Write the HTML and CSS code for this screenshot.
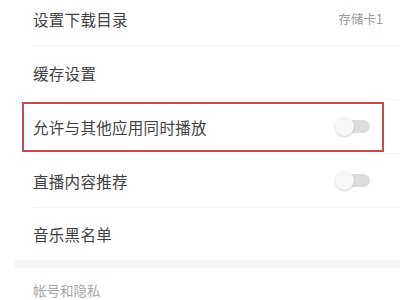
FILE: index.html
```html
<!DOCTYPE html>
<html>
<head>
<meta charset="utf-8">
<link rel="stylesheet" href="styles.css">
</head>
<body>
<div class="page">
  <div class="list">
    <div class="row first">
      <span class="label">设置下载目录</span>
      <span class="value">存储卡1</span>
    </div>
    <div class="row">
      <span class="label">缓存设置</span>
    </div>
    <div class="row">
      <span class="label">允许与其他应用同时播放</span>
      <span class="toggle"><span class="knob"></span></span>
    </div>
    <div class="row">
      <span class="label">直播内容推荐</span>
      <span class="toggle"><span class="knob"></span></span>
    </div>
    <div class="row last">
      <span class="label">音乐黑名单</span>
    </div>
  </div>
  <div class="band"></div>
  <div class="section">帐号和隐私</div>
  <div class="highlight"></div>
</div>
</body>
</html>
```
FILE: styles.css
```css
html, body {
  margin: 0;
  padding: 0;
  background: #ffffff;
}
body {
  font-family: "Noto Sans CJK SC", "Noto Sans", sans-serif;
  width: 400px;
  height: 300px;
  overflow: hidden;
}
.page {
  position: relative;
  display: flow-root;
  height: 300px;
}
.list {
  margin-top: -8px;
  padding-left: 33px;
}
.row {
  height: 54px;
  display: flex;
  align-items: center;
  justify-content: space-between;
  padding-right: 28px;
  border-bottom: 1px solid #f3f3f3;
  box-sizing: border-box;
}
.row.last {
  border-bottom: none;
  height: 52px;
}
.label {
  font-size: 15.5px;
  color: #404040;
  letter-spacing: 0.3px;
}
.value {
  font-size: 12.5px;
  color: #9a9a9a;
  margin-right: -11px;
}
.toggle {
  position: relative;
  width: 34px;
  height: 13px;
  border-radius: 7px;
  background: #dcdcdc;
  margin-right: 2px;
}
.knob {
  position: absolute;
  left: -1px;
  top: -3px;
  width: 19px;
  height: 19px;
  border-radius: 50%;
  background: #f7f7f7;
  box-shadow: 0 1px 2px rgba(0,0,0,0.18);
}
.band {
  margin-left: 15px;
  height: 8px;
  background: #f5f5f5;
}
.section {
  padding-left: 33px;
  padding-top: 12px;
  font-size: 13.5px;
  color: #a8a8a8;
}
.highlight {
  position: absolute;
  left: 22px;
  top: 102px;
  width: 358px;
  height: 46px;
  border: 2.5px solid #c64a55;
}
```
